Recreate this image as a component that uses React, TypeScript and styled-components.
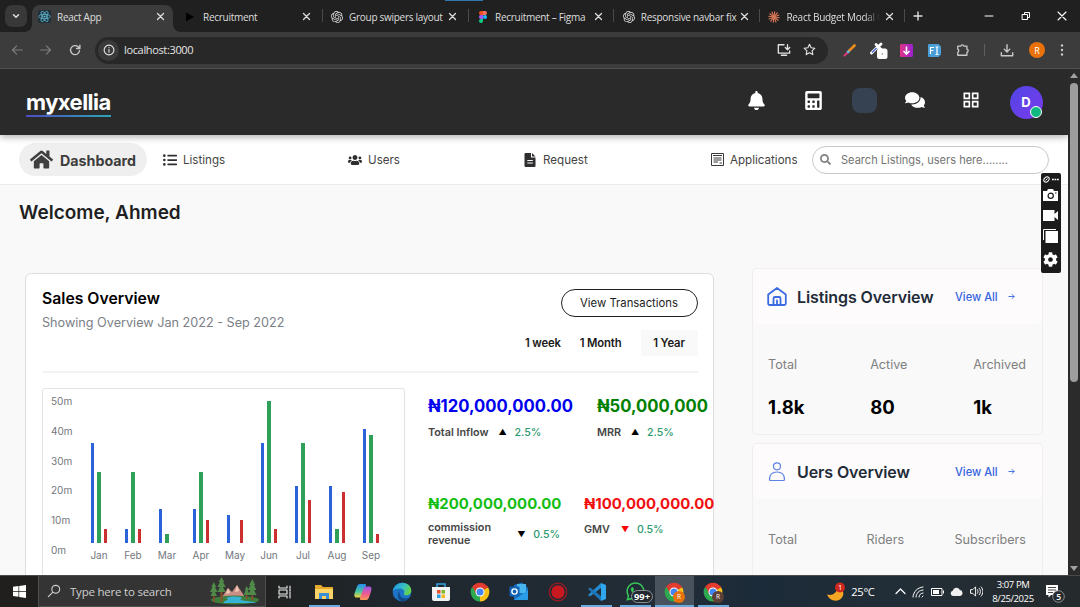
import React from 'react';
import styled, { createGlobalStyle, css } from 'styled-components';
import { FaBell, FaCalculator, FaComments, FaHome, FaListUl, FaUsers, FaSearch, FaCog, FaWhatsapp } from 'react-icons/fa';
import { SiOpenai } from 'react-icons/si';
import { MdOutlineGridView } from 'react-icons/md';

const Global = createGlobalStyle`
  * { box-sizing: border-box; }
  body { margin: 0; background: #202020; overflow: hidden; font-family: Inter, "Liberation Sans", sans-serif; }
  svg { display: block; flex: none; }
`;

const Desktop = styled.div`
  width: 1080px;
  height: 607px;
  display: flex;
  flex-direction: column;
  overflow: hidden;
`;

/* ---------- browser chrome ---------- */

const TabStrip = styled.div`
  position: relative;
  height: 32px;
  flex: none;
  display: flex;
  align-items: flex-end;
  background: #202020;
  padding-left: 5px;
  color: #dedede;
  font: 10px "Open Sans", "Noto Sans", sans-serif;
`;

const LoadingMark = styled.span`
  position: absolute;
  top: 0;
  left: 445px;
  width: 38px;
  height: 1px;
  background: #2f78ad;
`;

const TabSearch = styled.div`
  width: 22px;
  height: 22px;
  margin: 0 5px 5px 0;
  border-radius: 7px;
  background: #383838;
  display: grid;
  place-items: center;
`;

const Tab = styled.div<{ $active?: boolean; $w: number; $pad: number }>`
  position: relative;
  width: ${(p) => p.$w}px;
  height: 27px;
  display: flex;
  align-items: center;
  padding: 0 0 4px ${(p) => p.$pad}px;
  ${(p) =>
    p.$active &&
    css`
      background: #3c3c3c;
      border-radius: 8px 8px 0 0;
      &::before,
      &::after {
        content: '';
        position: absolute;
        bottom: 0;
        width: 7px;
        height: 7px;
      }
      &::before {
        left: -7px;
        background: radial-gradient(circle at 0 0, transparent 6.5px, #3c3c3c 7px);
      }
      &::after {
        right: -7px;
        background: radial-gradient(circle at 100% 0, transparent 6.5px, #3c3c3c 7px);
      }
    `}
`;

const TabTitle = styled.span<{ $fade?: boolean }>`
  width: 99px;
  margin-left: 6px;
  white-space: nowrap;
  overflow: hidden;
  letter-spacing: -0.28px;
  ${(p) => p.$fade && 'mask-image: linear-gradient(90deg, #000 78px, transparent 94px);'}
`;

const TabSeparator = styled.i`
  width: 1px;
  height: 13px;
  margin: 0 0 10px;
  background: #4a4a4a;
`;

const NewTab = styled.div`
  padding: 0 0 11px 8px;
`;

const WindowButtons = styled.div`
  margin-left: auto;
  display: flex;
  gap: 26.5px;
  padding: 0 13px 11px 0;
`;

const Toolbar = styled.div`
  height: 37px;
  flex: none;
  display: flex;
  align-items: center;
  background: #3c3c3c;
  border-bottom: 1px solid #525252;
  padding: 0 16px 0 11px;
  color: #c9c9c9;
`;

const NavButtons = styled.div`
  width: 84px;
  display: flex;
  gap: 17px;
`;

const AddressBar = styled.div`
  width: 733px;
  height: 27px;
  border-radius: 14px;
  background: #282828;
  display: flex;
  align-items: center;
  padding: 0 12px 0 3px;
  color: #e4e4e4;
  font: 11px "Open Sans", "Noto Sans", sans-serif;
  letter-spacing: -0.35px;
`;

const AddressText = styled.span`
  padding-bottom: 2px;
`;

const SiteInfo = styled.span`
  width: 21px;
  height: 21px;
  margin-right: 5px;
  border-radius: 50%;
  background: #3a3a3a;
  display: grid;
  place-items: center;
`;

const AddressActions = styled.span`
  margin-left: auto;
  display: flex;
  gap: 12px;
`;

const Extensions = styled.div`
  flex: 1;
  display: flex;
  align-items: center;
  justify-content: space-between;
  padding-left: 15px;
`;

const ToolDivider = styled.i`
  width: 1px;
  height: 12px;
  background: #5f5f5f;
`;

const Profile = styled.span`
  width: 16px;
  height: 16px;
  border-radius: 50%;
  background: #e8710a;
  color: #fff;
  font: 9px "Open Sans", sans-serif;
  display: grid;
  place-items: center;
`;

/* ---------- page ---------- */

const Viewport = styled.div`
  position: relative;
  flex: 1;
  min-height: 0;
  display: flex;
`;

const Page = styled.div`
  width: 1068px;
  background: #f9f9f9;
  overflow: hidden;
`;

const Scrollbar = styled.div`
  width: 12px;
  background: #2b2b2b;
  display: flex;
  flex-direction: column;
  align-items: center;
  padding: 4px 0;
`;

const Thumb = styled.div`
  width: 8px;
  height: 299px;
  margin: 5px 0 auto;
  border-radius: 4px;
  background: #9d9d9d;
`;

const Header = styled.header`
  position: relative;
  height: 66px;
  background: #2a2a2a;
  box-shadow: 0 2px 7px rgba(0, 0, 0, 0.32);
  display: flex;
  align-items: center;
  justify-content: space-between;
  padding: 0 16px 0 26px;
  color: #fff;
`;

const Logo = styled.div`
  height: 26px;
  margin-top: 4px;
  font-size: 22px;
  line-height: 23px;
  font-weight: 700;
  letter-spacing: -0.55px;
  border-bottom: 2px solid;
  border-image: linear-gradient(90deg, #4f4bc4, #2ba6b5) 1;
`;

const HeaderActions = styled.div`
  display: flex;
  align-items: center;
`;

const ActionSlot = styled.div<{ $w: number; $lift?: number }>`
  width: ${(p) => p.$w}px;
  padding-bottom: ${(p) => p.$lift ?? 4}px;
  display: grid;
  place-items: center;
`;

const BlankTile = styled.div`
  width: 25px;
  height: 25px;
  border-radius: 8px;
  background: #364152;
`;

const Avatar = styled.div`
  position: relative;
  width: 33px;
  height: 33px;
  border-radius: 50%;
  background: linear-gradient(135deg, #4f46e5, #7c3aed);
  font-size: 13px;
  font-weight: 700;
  display: grid;
  place-items: center;
  &::after {
    content: '';
    position: absolute;
    right: 1px;
    bottom: 1px;
    width: 10px;
    height: 10px;
    border-radius: 50%;
    border: 1.5px solid #fff;
    background: #10b981;
  }
`;

const Nav = styled.nav`
  height: 50px;
  background: #fff;
  border-bottom: 1px solid #ebebeb;
  display: grid;
  grid-template-columns: 144px 185px 176px 187px 101px 237px;
  align-items: center;
  padding-left: 19px;
`;

const NavItem = styled.a`
  display: flex;
  align-items: center;
  gap: 6px;
  color: #444;
  font-size: 11.6px;
  font-weight: 400;
  line-height: 15px;
  white-space: nowrap;
  svg { color: #2f2f2f; }
`;

const NavText = styled.span`
  padding-top: 1px;
`;

const ActivePill = styled(NavItem)`
  width: 128px;
  height: 33px;
  padding-left: 11px;
  gap: 7px;
  border-radius: 17px;
  background: #efefef;
  color: #3c3c3c;
  font-size: 14.25px;
  font-weight: 700;
  svg { color: #3f3f3f; }
`;

const SearchField = styled.div`
  height: 28px;
  border: 1px solid #c9c9c9;
  border-radius: 14px;
  display: flex;
  align-items: center;
  gap: 10px;
  padding-left: 7px;
  color: #757575;
  font-size: 11.05px;
  svg { color: #808080; }
`;

const Welcome = styled.h1`
  margin: 15px 0 0 19px;
  height: 26px;
  line-height: 26px;
  font-size: 19px;
  font-weight: 600;
  color: #1f1f1f;
`;

const Columns = styled.main`
  display: flex;
  align-items: flex-start;
  padding: 42px 25px 0;
  gap: 38px;
`;

const SalesCard = styled.section`
  width: 689px;
  height: 400px;
  margin-top: 5px;
  padding: 15px 15.5px 0 16px;
  background: #fff;
  border: 1px solid #dedede;
  border-radius: 6px;
`;

const SalesTop = styled.div`
  height: 82px;
  display: flex;
  justify-content: space-between;
`;

const SalesTitle = styled.h2`
  margin: 0;
  font-size: 15.75px;
  line-height: 20px;
  font-weight: 600;
  color: #000;
`;

const SalesSub = styled.p`
  margin: 5px 0 0;
  font-size: 12.65px;
  line-height: 18px;
  color: #7b8086;
`;

const SalesControls = styled.div`
  display: flex;
  flex-direction: column;
  align-items: flex-end;
`;

const ViewTransactions = styled.button`
  width: 137px;
  height: 28px;
  padding: 0;
  border: 1px solid #222;
  border-radius: 14px;
  background: #fff;
  color: #1c1c1c;
  font: 400 11.3px Inter, sans-serif;
`;

const Periods = styled.div`
  display: flex;
  align-items: center;
  margin-top: 13px;
  font-size: 11.3px;
  font-weight: 600;
  letter-spacing: -0.15px;
  color: #1a1a1a;
`;

const Period = styled.span<{ $on?: boolean }>`
  height: 26px;
  line-height: 26px;
  margin-right: 19px;
  ${(p) => p.$on && 'width: 57px; margin: 0; background: #f9f9f9; text-align: center;'}
`;

const SalesBody = styled.div`
  display: flex;
  border-top: 2px solid #f3f3f3;
  padding-top: 15px;
`;

const ChartBox = styled.div`
  width: 363px;
  height: 280px;
  flex: none;
  display: flex;
  border: 1px solid #e2e2e2;
  border-radius: 3px;
  padding: 6px 0 0 8px;
  color: #73777d;
  font-size: 10px;
`;

const YAxis = styled.div`
  width: 31px;
  height: 162px;
  display: flex;
  flex-direction: column;
  justify-content: space-between;
  line-height: 13px;
`;

const Months = styled.div`
  display: flex;
  height: 168px;
`;

const Month = styled.div`
  width: 34px;
  display: flex;
  flex-direction: column;
  align-items: center;
  text-align: center;
  line-height: 12px;
`;

const BarGroup = styled.div`
  height: 148px;
  width: 16px;
  display: flex;
  align-items: flex-end;
  justify-content: space-between;
  margin-bottom: 6px;
`;

const Bar = styled.i<{ $color: string; $w: number }>`
  width: ${(p) => p.$w}px;
  background: ${(p) => p.$color};
`;

const Metrics = styled.div`
  padding: 7px 0 0 23px;
  display: flex;
  flex-direction: column;
  gap: 51px;
`;

const MetricRow = styled.div<{ $gap: number }>`
  display: flex;
  gap: ${(p) => p.$gap}px;
  height: 47px;
`;

const Metric = styled.div<{ $w: number }>`
  width: ${(p) => p.$w}px;
  white-space: nowrap;
`;

const Amount = styled.div<{ $color: string; $size: number }>`
  height: 22px;
  line-height: 22px;
  color: ${(p) => p.$color};
  font-size: ${(p) => p.$size}px;
  font-weight: 700;
`;

const MetricInfo = styled.div<{ $top?: number }>`
  display: flex;
  align-items: center;
  margin-top: ${(p) => p.$top ?? 9}px;
  color: #454545;
  font-size: 10.8px;
  line-height: 13px;
  font-weight: 600;
`;

const Trend = styled.span<{ $color?: string; $ml: number }>`
  width: 7px;
  margin: 0 9px 0 ${(p) => p.$ml}px;
  font-size: 8px;
  color: ${(p) => p.$color ?? '#000'};
`;

const Percent = styled.span`
  font-size: 10.6px;
  font-weight: 500;
  color: #2c9a6e;
`;

const LabelWrap = styled.span`
  width: 83px;
  white-space: normal;
`;

const SideColumn = styled.aside`
  width: 291px;
  display: flex;
  flex-direction: column;
  gap: 8px;
`;

const OverviewCard = styled.section`
  height: 167px;
  border: 1px solid #f2eef0;
  border-radius: 5px;
`;

const OverviewHead = styled.div`
  height: 55px;
  display: flex;
  align-items: center;
  border-radius: 5px;
  background: #fefbfd;
  padding-left: 14px;
`;

const OverviewTitle = styled.h3`
  width: 158px;
  margin: 0 0 0 10px;
  font-size: 16px;
  font-weight: 600;
  color: #222b38;
  letter-spacing: -0.1px;
`;

const ViewAll = styled.a`
  display: flex;
  align-items: center;
  gap: 10px;
  color: #3565dd;
  font-size: 11.1px;
  font-weight: 500;
  white-space: nowrap;
`;

const Stats = styled.div`
  display: flex;
  justify-content: space-between;
  padding: 32px 16px 0 15px;
`;

const StatLabel = styled.div`
  font-size: 12.6px;
  line-height: 18px;
  color: #808080;
`;

const StatValue = styled.div`
  margin-top: 21px;
  font-size: 18.5px;
  line-height: 24px;
  font-weight: 700;
  color: #000;
`;

const Recorder = styled.div`
  position: absolute;
  left: 1040.5px;
  top: 104px;
  width: 20px;
  height: 100px;
  border-radius: 2px;
  background: #1b1b1b;
  color: #fff;
  display: flex;
  flex-direction: column;
  align-items: center;
  justify-content: space-between;
  padding: 3px 0 6px;
  svg:first-child { margin-bottom: -3px; }
`;

/* ---------- taskbar ---------- */

const Taskbar = styled.footer`
  height: 32px;
  flex: none;
  display: flex;
  align-items: center;
  background: linear-gradient(90deg, #201f1d 0, #20211f 260px, #1f272e 400px, #222d37 660px, #1c2b39 760px, #222e37 900px, #252a2c 1080px);
  border-top: 1px solid #4a4a4a;
  color: #fff;
  font-family: "Open Sans", "Noto Sans", sans-serif;
`;

const Start = styled.div`
  width: 38px;
  display: grid;
  place-items: center;
`;

const TaskSearch = styled.div`
  width: 228px;
  height: 31px;
  display: flex;
  align-items: center;
  background: #343434;
  border: 1px solid #505050;
  border-top: 0;
  padding: 0 5px 0 8px;
  color: #cfcfcf;
  font-size: 11.5px;
  letter-spacing: -0.22px;
  svg:last-child { margin-left: auto; }
`;

const SearchText = styled.span`
  margin-left: 9px;
`;

const TaskSlot = styled.div<{ $run?: boolean; $active?: boolean }>`
  position: relative;
  width: 38.9px;
  height: 31px;
  display: grid;
  place-items: center;
  background: ${(p) => (p.$active ? '#48535d' : 'transparent')};
  ${(p) =>
    p.$run &&
    css`
      &::after {
        content: '';
        position: absolute;
        bottom: 0;
        left: ${p.$active ? 0 : 4}px;
        right: ${p.$active ? 0 : 4}px;
        height: 2px;
        background: #6cabdd;
      }
    `}
`;

const CountBadge = styled.span`
  position: absolute;
  left: 15px;
  bottom: 4px;
  height: 13px;
  padding: 0 2px;
  border: 1px solid #8a8f93;
  border-radius: 7px;
  background: #23292e;
  font-size: 9.3px;
  font-weight: 700;
  line-height: 11px;
  z-index: 1;
`;

const Tray = styled.div`
  margin-left: auto;
  display: flex;
  align-items: center;
  font-size: 11.2px;
  letter-spacing: -0.3px;
`;

const Temperature = styled.span`
  margin-left: 5px;
`;

const TrayIcons = styled.div`
  display: flex;
  align-items: center;
  gap: 6.6px;
  margin: 0 7px 0 20px;
`;

const Clock = styled.div`
  width: 46px;
  text-align: center;
  font-size: 9.5px;
  line-height: 14px;
  letter-spacing: -0.4px;
  white-space: nowrap;
`;

const Notices = styled.div`
  width: 35px;
  margin-left: 9px;
`;

/* ---------- drawings ---------- */

const Stroke = ({ w = 14, h = w, vb = '0 0 16 16', d, sw = 1.4, color = 'currentColor', fill = 'none' }: { w?: number; h?: number; vb?: string; d: string; sw?: number; color?: string; fill?: string }) => (
  <svg width={w} height={h} viewBox={vb} fill={fill} stroke={color} strokeWidth={sw} strokeLinecap="round" strokeLinejoin="round">
    <path d={d} />
  </svg>
);

const CloseX = () => <Stroke w={9} vb="0 0 9 9" d="M1.5 1.5l6 6M7.5 1.5l-6 6" sw={1.3} />;

const FigmaLogo = () => (
  <svg width="12" height="12" viewBox="0 0 12 12">
    <path d="M4 0h2v4H4a2 2 0 010-4z" fill="#f24e1e" />
    <path d="M6 0h2a2 2 0 010 4H6z" fill="#ff7262" />
    <path d="M4 4h2v4H4a2 2 0 010-4z" fill="#a259ff" />
    <circle cx="8" cy="6" r="2" fill="#1abcfe" />
    <path d="M4 8h2v2a2 2 0 11-2-2z" fill="#0acf83" />
  </svg>
);

const ReactLogo = () => (
  <svg width="13" height="13" viewBox="0 0 13 13">
    <rect width="13" height="13" rx="2" fill="#20303a" />
    <g fill="none" stroke="#61b9d3" strokeWidth=".8">
      <ellipse cx="6.5" cy="6.5" rx="5.8" ry="2.2" />
      <ellipse cx="6.5" cy="6.5" rx="5.8" ry="2.2" transform="rotate(60 6.5 6.5)" />
      <ellipse cx="6.5" cy="6.5" rx="5.8" ry="2.2" transform="rotate(120 6.5 6.5)" />
    </g>
    <circle cx="6.5" cy="6.5" r="1.1" fill="#61b9d3" />
  </svg>
);

const PlayMark = () => (
  <svg width="13" height="12" viewBox="0 0 13 12"><path d="M2 1.500l8 4.500-8 4.500z" fill="#000" /></svg>
);

const Burst = () => (
  <svg width="12" height="12" viewBox="-6 -6 12 12" stroke="#d97757" strokeWidth="1.15" strokeLinecap="round">
    {[0, 30, 60, 90, 120, 150].map((a) => (
      <path key={a} d="M-5.3 0H5.3" transform={`rotate(${a + 8})`} />
    ))}
  </svg>
);

const ChromeLogo = ({ badge }: { badge?: string }) => (
  <svg width="24" height="24" viewBox="-12 -12 24 24">
    <path d="M0 0L-8.1-4.7A9.4 9.4 0 018.1-4.7z" fill="#e33b2e" />
    <path d="M0 0L8.1-4.7A9.4 9.4 0 010 9.4z" fill="#fbc116" />
    <path d="M0 0L0 9.4A9.4 9.4 0 01-8.1-4.7z" fill="#2da94f" />
    <path d="M0-4.5H8.2L7.4-6-7.4-6-4 2z" fill="#e33b2e" />
    <circle r="4.5" fill="#fff" />
    <circle r="3.5" fill="#4285f4" />
    {badge && (
      <>
        <circle cx="5" cy="5" r="6" fill={badge} />
        <text x="5" y="7.4" textAnchor="middle" fontSize="6.5" fill="#fff" fontFamily="Open Sans, sans-serif">R</text>
      </>
    )}
  </svg>
);

const Landscape = () => (
  <svg width="52" height="28" viewBox="0 0 52 28">
    <path d="M14 20l6-9 4 4 5-7 8 12z" fill="#c98f86" />
    <path d="M20 11l2 5-4 1zM29 8l2 6-4 1z" fill="#f0c9b4" />
    <ellipse cx="27" cy="23" rx="24" ry="4.4" fill="#3f7d3c" />
    <path d="M18 21c8-3 19-1 15 1s11 2 16 4H16c-3-2 8-3 2-5z" fill="#36b3d6" />
    <g fill="#8a4f2a">
      <path d="M5 9h1.6v16H5zM12.5 3h2v22h-2zM43.5 5h1.6v18h-1.6zM38 12h1.4v10H38z" />
    </g>
    <g fill="#4f8a49">
      <path d="M5.800 5l2.500 5H7l2.500 5H7l2 4H2.500l2-4H2l2.500-5H3.300zM13.500 0l2.800 5H15l2.700 5H15l2.500 5h-8l2.500-5H9.300L12 5h-1.300zM44.300 2l3 6H46l2.500 5H46l2.500 5h-8.500l2.500-5H40l2.500-5h-1.300zM38.700 9l2 4h-1l2 5h-6l2-5h-1z" />
    </g>
  </svg>
);

const FolderIcon = () => (
  <svg width="18" height="16" viewBox="0 0 18 16">
    <path d="M0 1h6l2 2h10v12H0z" fill="#e5a92e" />
    <path d="M0 5h18v10H0z" fill="#fcd466" />
    <path d="M4 15V9h10v6h-3v-3H7v3z" fill="#3b8ed6" />
  </svg>
);

const CopilotIcon = () => (
  <svg width="18" height="18" viewBox="0 0 18 18">
    <defs>
      <linearGradient id="cpA" x1="0" y1="0" x2="0" y2="1">
        <stop offset="0" stopColor="#2a8df0" /><stop offset=".55" stopColor="#45c5a0" /><stop offset="1" stopColor="#f6d33c" />
      </linearGradient>
      <linearGradient id="cpB" x1="0" y1="0" x2="0" y2="1">
        <stop offset="0" stopColor="#9656e8" /><stop offset=".55" stopColor="#ee5a92" /><stop offset="1" stopColor="#f79a52" />
      </linearGradient>
    </defs>
    <path d="M6 1h5c1.500 0 1 2 .5 3L9 12c-.5 2-1.500 2.500-3 2.500H2.500C0 14.500 0 12 .7 10L3 3.500C3.500 2 4.500 1 6 1z" fill="url(#cpA)" />
    <path d="M12.500 3.500h2.700c2.600 0 2.600 2.500 1.900 4.500L15 14.500c-.6 1.700-1.500 2.500-3 2.500H7c-1.500 0-1.200-1.500-.5-3L9 6.500c.7-2 1.500-3 3.500-3z" fill="url(#cpB)" />
  </svg>
);

const EdgeIcon = () => (
  <svg width="20" height="20" viewBox="0 0 20 20">
    <defs>
      <linearGradient id="edgeA" x1="0" y1="0" x2="1" y2=".4">
        <stop offset="0" stopColor="#1c8ee0" /><stop offset=".6" stopColor="#35c0c8" /><stop offset="1" stopColor="#62d24f" />
      </linearGradient>
    </defs>
    <circle cx="10" cy="10" r="9.300" fill="#1b74c8" />
    <path d="M.8 9C2 3.500 6 .7 10.500.7c5 0 8.800 3.600 8.800 7.800 0 3-2.300 4.800-5 4.800-1.800 0-3-.6-2.500-1.500 1.700-3-.8-5.300-4-5.300C4.500 6.500 2 7.500.8 9z" fill="url(#edgeA)" />
    <path d="M8 8c-2 4 1 9 6 8.500 2-.2 3.500-1 4-1.500-1 2.500-4 4.300-7 4.300C6 19 4 13 8 8z" fill="#124a86" />
  </svg>
);

const StoreIcon = () => (
  <svg width="20" height="20" viewBox="0 0 20 20">
    <path d="M6 5V2h8v3" fill="none" stroke="#35a3df" strokeWidth="1.500" />
    <path d="M1 5h18v12a2 2 0 01-2 2H3a2 2 0 01-2-2z" fill="#f2f2f2" />
    <path d="M6 8h3.500v3.500H6z" fill="#e8502a" /><path d="M10.500 8H14v3.500h-3.500z" fill="#7db928" />
    <path d="M6 12.500h3.500V16H6z" fill="#2a9fe0" /><path d="M10.500 12.500H14V16h-3.500z" fill="#f7b71e" />
  </svg>
);

const OutlookIcon = () => (
  <svg width="20" height="19" viewBox="0 0 20 19">
    <path d="M5 3l8-2.500L19 6v11a1 1 0 01-1 1H5z" fill="#1a6fc0" />
    <path d="M8 2h9v9H8z" fill="#48b5ee" />
    <path d="M5 18L19 8v9a1 1 0 01-1 1z" fill="#2a9be6" />
    <rect x=".5" y="4.500" width="10" height="10" rx="1" fill="#0f62b5" />
    <circle cx="5.500" cy="9.500" r="2.600" fill="none" stroke="#fff" strokeWidth="1.400" />
  </svg>
);

const VsCodeIcon = () => (
  <svg width="20" height="20" viewBox="0 0 20 20">
    <path d="M14 1L19 3v14l-5 2z" fill="#2fa6ee" />
    <path d="M14 1v5L3 14.500 1 13z" fill="#2489cf" />
    <path d="M14 19v-5L3 5.500 1 7z" fill="#1d75b8" />
  </svg>
);

const RecordIcon = () => (
  <svg width="20" height="20" viewBox="0 0 20 20">
    <circle cx="10" cy="10" r="8.800" fill="none" stroke="#9c1a22" strokeWidth="1.200" />
    <circle cx="10" cy="10" r="6.700" fill="#c91820" />
  </svg>
);

const Tools = () => (
  <Extensions>
    <svg width="13" height="13" viewBox="0 0 13 13">
      <path d="M1.500 11.500l2.800-2.800" stroke="#d83b74" strokeWidth="2.200" strokeLinecap="round" />
      <path d="M4.300 8.700l2.500-2.500" stroke="#6fb8e0" strokeWidth="2.600" />
      <path d="M6.800 6.200L11.500 1.500" stroke="#f08c1e" strokeWidth="2.600" strokeLinecap="round" />
    </svg>
    <svg width="14" height="18" viewBox="0 0 14 18" overflow="visible">
      <path d="M.5 12L6.500 6" stroke="#fff" strokeWidth="3" strokeLinecap="round" />
      <path d="M1 11.500l4.500-4.500" stroke="#4968c8" strokeWidth="1.500" />
      <path d="M5 3.500L10 8.500M7 6l3-3" stroke="#fff" strokeWidth="2.800" strokeLinecap="round" />
      <rect x="6" y="7.500" width="10.500" height="10.500" rx="2.500" fill="#fff" />
      <circle cx="11.300" cy="13" r=".7" fill="#777" />
    </svg>
    <svg width="13" height="13" viewBox="0 0 13 13">
      <defs><linearGradient id="dl"><stop stopColor="#e0358a" /><stop offset="1" stopColor="#9a1fd0" /></linearGradient></defs>
      <rect width="13" height="13" rx="1.500" fill="url(#dl)" />
      <path d="M6.500 2.500v7M3.500 7l3 3 3-3" fill="none" stroke="#fff" strokeWidth="1.600" />
    </svg>
    <svg width="13" height="13" viewBox="0 0 13 13">
      <path d="M1 0h9.500L13 2.500v8L10.500 13H1a1 1 0 01-1-1V1a1 1 0 011-1z" fill="#4a9ed8" />
      <path d="M2.500 10V3.500H6M2.500 6.500h3M7.500 3h3M9 3v7.500M7.500 10.500h3" fill="none" stroke="#fff" strokeWidth="1.200" />
    </svg>
    <Stroke w={14} d="M2 3.500h3.500a1.800 1.800 0 013.500 0H12.500V7a1.800 1.800 0 010 3.500V14H2v-3.500A1.900 1.900 0 002 7z" sw={1.500} />
    <ToolDivider />
    <Stroke w={14} d="M8 2v8M4.800 7L8 10.200 11.200 7M1.500 11v3.500h13V11" sw={1.600} />
    <Profile>R</Profile>
    <svg width="4" height="14" viewBox="0 0 4 14" fill="currentColor"><circle cx="2" cy="2.500" r="1.200" /><circle cx="2" cy="7" r="1.200" /><circle cx="2" cy="11.500" r="1.200" /></svg>
  </Extensions>
);

/* ---------- data ---------- */

const tabs = [
  { title: 'React App', icon: <ReactLogo />, active: true, width: 141, pad: 6 },
  { title: 'Recruitment', icon: <PlayMark />, width: 149, pad: 11 },
  { title: 'Group swipers layout', icon: <SiOpenai size={12} />, width: 144.6, pad: 8 },
  { title: 'Recruitment – Figma', icon: <FigmaLogo />, width: 144.6, pad: 8.4 },
  { title: 'Responsive navbar fix', icon: <SiOpenai size={12} />, width: 144.6, pad: 8.6 },
  { title: 'React Budget Modal C', icon: <Burst />, fade: true, width: 144.6, pad: 8.6 },
];

const months: [string, number, number, number][] = [
  ['Jan', 100, 71, 14],
  ['Feb', 14, 71, 14],
  ['Mar', 34, 9, 0],
  ['Apr', 34, 71, 23],
  ['May', 28, 0, 23],
  ['Jun', 100, 142, 14],
  ['Jul', 57, 100, 43],
  ['Aug', 57, 14, 51],
  ['Sep', 114, 108, 9],
];

const Overview = ({ icon, title, stats }: { icon: React.ReactNode; title: string; stats: [string, string][] }) => (
  <OverviewCard>
    <OverviewHead>
      {icon}
      <OverviewTitle>{title}</OverviewTitle>
      <ViewAll>
        View All
        <Stroke w={7} vb="0 0 8 8" d="M1 4h6M4.700 1.700L7 4 4.700 6.300" sw={1} />
      </ViewAll>
    </OverviewHead>
    <Stats>
      {stats.map(([label, value]) => (
        <div key={label}>
          <StatLabel>{label}</StatLabel>
          <StatValue>{value}</StatValue>
        </div>
      ))}
    </Stats>
  </OverviewCard>
);

export default function App() {
  return (
    <Desktop>
      <Global />
      <TabStrip>
        <LoadingMark />
        <TabSearch><Stroke w={8} vb="0 0 8 8" d="M1.500 2.800L4 5.200l2.500-2.400" sw={1.500} /></TabSearch>
        {tabs.map((t, i) => (
          <React.Fragment key={t.title}>
            <Tab $active={t.active} $w={t.width} $pad={t.pad}>
              {t.icon}
              <TabTitle $fade={t.fade}>{t.title}</TabTitle>
              <CloseX />
            </Tab>
            {i > 0 && <TabSeparator />}
          </React.Fragment>
        ))}
        <NewTab><Stroke w={10} vb="0 0 10 10" d="M5 1v8M1 5h8" sw={1.400} /></NewTab>
        <WindowButtons>
          <Stroke w={10} vb="0 0 10 10" d="M1 5h8" sw={1} color="#fff" />
          <Stroke w={10} vb="0 0 10 10" d="M1.500 3.500h5v5h-5zM3.500 3.500v-2h5v5h-2" sw={1} color="#fff" />
          <Stroke w={10} vb="0 0 10 10" d="M1 1l8 8M9 1L1 9" sw={1.100} color="#fff" />
        </WindowButtons>
      </TabStrip>
      <Toolbar>
        <NavButtons>
          <Stroke w={12} d="M15 8H2M7.500 2.500L2 8l5.500 5.500" sw={1.600} color="#7c7c7c" />
          <Stroke w={12} d="M1 8h13M8.500 2.500L14 8l-5.500 5.500" sw={1.600} color="#7c7c7c" />
          <Stroke w={12} d="M14 9a6 6 0 11-1.800-5.200L14.500 6M14.500 1.500V6H10" sw={1.800} />
        </NavButtons>
        <AddressBar>
          <SiteInfo><Stroke w={12} d="M8 1.500a6.500 6.500 0 100 13 6.500 6.500 0 000-13M8 7.500v3.500M8 4.800v.1" sw={1.500} /></SiteInfo>
          <AddressText>localhost:3000</AddressText>
          <AddressActions>
            <Stroke w={14} d="M8 2H1.500v9.500h13V9M5 14h6M12 2v5.500M9.500 5.200L12 7.700l2.500-2.500" sw={1.500} />
            <Stroke w={13} d="M8 1.500l2 4.300 4.600.6-3.400 3.200.9 4.700L8 12l-4.100 2.300.9-4.700L1.400 6.400 6 5.800z" sw={1.400} />
          </AddressActions>
        </AddressBar>
        <Tools />
      </Toolbar>

      <Viewport>
        <Page>
          <Header>
            <Logo>myxellia</Logo>
            <HeaderActions>
              <ActionSlot $w={57}><FaBell size={19} /></ActionSlot>
              <ActionSlot $w={56}><FaCalculator size={19} /></ActionSlot>
              <ActionSlot $w={46}><BlankTile /></ActionSlot>
              <ActionSlot $w={55}><FaComments size={20} /></ActionSlot>
              <ActionSlot $w={58}><MdOutlineGridView size={20} /></ActionSlot>
              <ActionSlot $w={52} $lift={0}><Avatar>D</Avatar></ActionSlot>
            </HeaderActions>
          </Header>
          <Nav>
            <ActivePill><FaHome size={23} /><NavText>Dashboard</NavText></ActivePill>
            <NavItem><FaListUl size={14} /><NavText>Listings</NavText></NavItem>
            <NavItem><FaUsers size={14} /><NavText>Users</NavText></NavItem>
            <NavItem>
              <svg width="13" height="14" viewBox="0 0 13 14">
                <path d="M.5 1A1 1 0 011.500 0H7v4.500h4.500V13a1 1 0 01-1 1h-9a1 1 0 01-1-1z" fill="#2f2f2f" />
                <path d="M8 0l3.500 3.500H8z" fill="#2f2f2f" />
                <path d="M3.300 7.500h5.500M3.300 10h5.500" stroke="#fff" strokeWidth="1" />
              </svg>
              <NavText>Request</NavText>
            </NavItem>
            <NavItem>
              <svg width="13" height="14" viewBox="0 0 13 14" fill="none" stroke="#3a3a3a">
                <path d="M.5.5h12v12H.500zM2 2.500h9M2.500 5h8M2.500 7h8M2.500 9h4.500M8.500 10h2.500" strokeWidth="1" />
              </svg>
              <NavText>Applications</NavText>
            </NavItem>
            <SearchField><FaSearch size={11} /><NavText>Search Listings, users here........</NavText></SearchField>
          </Nav>
          <Welcome>Welcome, Ahmed</Welcome>
          <Columns>
            <SalesCard>
              <SalesTop>
                <div>
                  <SalesTitle>Sales Overview</SalesTitle>
                  <SalesSub>Showing Overview Jan 2022 - Sep 2022</SalesSub>
                </div>
                <SalesControls>
                  <ViewTransactions>View Transactions</ViewTransactions>
                  <Periods>
                    <Period>1 week</Period>
                    <Period>1 Month</Period>
                    <Period $on>1 Year</Period>
                  </Periods>
                </SalesControls>
              </SalesTop>
              <SalesBody>
                <ChartBox>
                  <YAxis>
                    {['50m', '40m', '30m', '20m', '10m', '0m'].map((l) => <span key={l}>{l}</span>)}
                  </YAxis>
                  <Months>
                    {months.map(([name, blue, green, red]) => (
                      <Month key={name}>
                        <BarGroup>
                          <Bar $w={3} $color="#2b62d9" style={{ height: blue }} />
                          <Bar $w={4} $color="#2fa058" style={{ height: green }} />
                          <Bar $w={3} $color="#cc2f2f" style={{ height: red }} />
                        </BarGroup>
                        {name}
                      </Month>
                    ))}
                  </Months>
                </ChartBox>
                <Metrics>
                  <MetricRow $gap={24}>
                    <Metric $w={145}>
                      <Amount $color="#0000ee" $size={16.65}>₦120,000,000.00</Amount>
                      <MetricInfo>Total Inflow<Trend $ml={10}>▲</Trend><Percent>2.5%</Percent></MetricInfo>
                    </Metric>
                    <Metric $w={110}>
                      <Amount $color="#008000" $size={16.65}>₦50,000,000</Amount>
                      <MetricInfo>MRR<Trend $ml={10}>▲</Trend><Percent>2.5%</Percent></MetricInfo>
                    </Metric>
                  </MetricRow>
                  <MetricRow $gap={24}>
                    <Metric $w={132}>
                      <Amount $color="#14bd14" $size={14.9}>₦200,000,000.00</Amount>
                      <MetricInfo $top={6}><LabelWrap>commission revenue</LabelWrap><Trend $ml={7}>▼</Trend><Percent>0.5%</Percent></MetricInfo>
                    </Metric>
                    <Metric $w={130}>
                      <Amount $color="#f01010" $size={14.9}>₦100,000,000.00</Amount>
                      <MetricInfo $top={8}>GMV<Trend $ml={11} $color="#f00">▼</Trend><Percent>0.5%</Percent></MetricInfo>
                    </Metric>
                  </MetricRow>
                </Metrics>
              </SalesBody>
            </SalesCard>
            <SideColumn>
              <Overview
                icon={<Stroke w={20} vb="0 0 20 20" d="M1.200 7.500L10 1l8.800 6.500v9a1.500 1.500 0 01-1.500 1.500H2.700a1.500 1.500 0 01-1.500-1.500zM6.500 18v-6.500A1.500 1.500 0 018 10h4a1.500 1.500 0 011.500 1.500V18M10 13.500V18" sw={1.800} color="#3b6be0" />}
                title="Listings Overview"
                stats={[['Total', '1.8k'], ['Active', '80'], ['Archived', '1k']]}
              />
              <Overview
                icon={<Stroke w={20} vb="0 0 20 20" d="M10 .8a3.500 3.500 0 100 7 3.500 3.500 0 000-7M2.500 17.500c-.3-5 3-7.500 7.500-7.500s7.800 2.500 7.500 7.500c0 .7-.5 1-1 1h-13c-.5 0-1-.3-1-1z" sw={1.200} color="#5b82e4" />}
                title="Uers Overview"
                stats={[['Total', '20.7k'], ['Riders', '8.5k'], ['Subscribers', '7.5k']]}
              />
            </SideColumn>
          </Columns>
        </Page>
        <Scrollbar>
          <svg width="8" height="5" viewBox="0 0 8 5"><path d="M4 0l4 5H0z" fill="#a0a0a0" /></svg>
          <Thumb />
          <svg width="8" height="5" viewBox="0 0 8 5"><path d="M4 5l4-5H0z" fill="#a0a0a0" /></svg>
        </Scrollbar>
        <Recorder>
          <svg width="16" height="7" viewBox="0 0 16 7">
            <ellipse cx="3.500" cy="3.500" rx="3" ry="2.200" transform="rotate(-45 3.500 3.500)" fill="none" stroke="#fff" />
            <path d="M2.500 4.500l2-2" stroke="#fff" />
            <path d="M9 3.500h7" stroke="#fff" strokeWidth="1.300" strokeDasharray="1.800 .7" />
          </svg>
          <svg width="15" height="12" viewBox="0 0 15 12">
            <path d="M0 2h4l1-2h5l1 2h4v10H0z" fill="#fff" />
            <circle cx="7.700" cy="6.800" r="2.600" fill="none" stroke="#1b1b1b" strokeWidth="1.200" />
            <path d="M12 4h1.500" stroke="#1b1b1b" />
          </svg>
          <svg width="15" height="11" viewBox="0 0 15 11"><path d="M0 0h11.500v4L15 1v9l-3.500-3v4H0z" fill="#fff" /></svg>
          <svg width="15" height="14" viewBox="0 0 15 14">
            <path d="M.5 11V.5H13" fill="none" stroke="#fff" />
            <path d="M2.500 2H15v12H2.500z" fill="#fff" />
          </svg>
          <FaCog size={15} />
        </Recorder>
      </Viewport>

      <Taskbar>
        <Start>
          <svg width="13" height="13" viewBox="0 0 13 13" fill="#fff"><path d="M0 1.800l5.500-.8v5H0zM6.200.9L13 0v6H6.200zM0 6.800h5.500v5L0 11zM6.200 6.800H13V13l-6.800-.9z" /></svg>
        </Start>
        <TaskSearch>
          <Stroke w={14} d="M10 1.500a4.500 4.500 0 110 9 4.500 4.500 0 010-9M6.500 9.500L1.500 14.500" sw={1.300} />
          <SearchText>Type here to search</SearchText>
          <Landscape />
        </TaskSearch>
        <TaskSlot>
          <Stroke w={14} vb="0 0 14 14" d="M1 1v2h8V1M1 13v-2h8v2M1 5h8v4H1zM12 1v3.500M12 7v6M11.500 5.700h1" sw={1.100} color="#eee" />
        </TaskSlot>
        <TaskSlot $run><FolderIcon /></TaskSlot>
        <TaskSlot><CopilotIcon /></TaskSlot>
        <TaskSlot><EdgeIcon /></TaskSlot>
        <TaskSlot><StoreIcon /></TaskSlot>
        <TaskSlot><ChromeLogo /></TaskSlot>
        <TaskSlot><OutlookIcon /></TaskSlot>
        <TaskSlot><RecordIcon /></TaskSlot>
        <TaskSlot $run><VsCodeIcon /></TaskSlot>
        <TaskSlot $run><FaWhatsapp size={21} color="#35c759" /><CountBadge>99+</CountBadge></TaskSlot>
        <TaskSlot $run $active><ChromeLogo badge="#e8710a" /></TaskSlot>
        <TaskSlot $run><ChromeLogo badge="#5d4037" /></TaskSlot>
        <Tray>
          <svg width="20" height="20" viewBox="0 0 20 20">
            <path d="M1 12.500c5 1.500 10-1 11-8C19 8 19 15 13 18c-5 2-10-.5-12-5.500z" fill="#f5a623" />
            <circle cx="14" cy="5.500" r="5" fill="#d0281e" />
            <text x="14" y="8.200" textAnchor="middle" fontSize="7.500" fill="#fff" fontFamily="Open Sans, sans-serif">1</text>
          </svg>
          <Temperature>25°C</Temperature>
          <TrayIcons>
            <Stroke w={11} vb="0 0 11 11" d="M1 7.500l4.500-4.500L10 7.500" sw={1.200} />
            <Stroke w={12} vb="0 0 12 12" d="M1 11C1.500 5.500 5.500 1.500 11 1M4 11c.3-4 3-6.700 7-7M7 11c.2-2.300 1.700-3.800 4-4M10 11l1-1" sw={1} />
            <svg width="13" height="8" viewBox="0 0 13 8"><path d="M.5.5h10.500v7H.5zM12.500 2.500v3" fill="none" stroke="#fff" /><path d="M2 2h6v4H2z" fill="#fff" /></svg>
            <svg width="13" height="9" viewBox="0 0 13 9"><path d="M3 9a2.700 2.700 0 01-.3-5.300 3.800 3.800 0 017-1A3.200 3.200 0 0110 9z" fill="#f0f0f0" /></svg>
            <Stroke w={13} vb="0 0 14 12" d="M1 4h2l3-3v10L3 8H1zM8 4c.8 1.200.8 2.800 0 4M10 2.500c1.700 2 1.700 5 0 7M12 1c2.500 3 2.500 7 0 10" sw={1} />
          </TrayIcons>
          <Clock>3:07 PM<br />8/25/2025</Clock>
          <Notices>
            <svg width="20" height="22" viewBox="0 0 20 22">
              <path d="M1 4h12v10H6l-2.500 2.500V14H1z" fill="#fff" />
              <path d="M3 6.500h8M3 9h8M3 11.500h5" stroke="#333" strokeWidth=".9" />
              <circle cx="13.500" cy="15.500" r="5.800" fill="#262b2e" stroke="#9a9a9a" strokeWidth=".9" />
              <text x="13.500" y="18.700" textAnchor="middle" fontSize="8.500" fontWeight="600" fill="#fff" fontFamily="Open Sans, sans-serif">5</text>
            </svg>
          </Notices>
        </Tray>
      </Taskbar>
    </Desktop>
  );
}
